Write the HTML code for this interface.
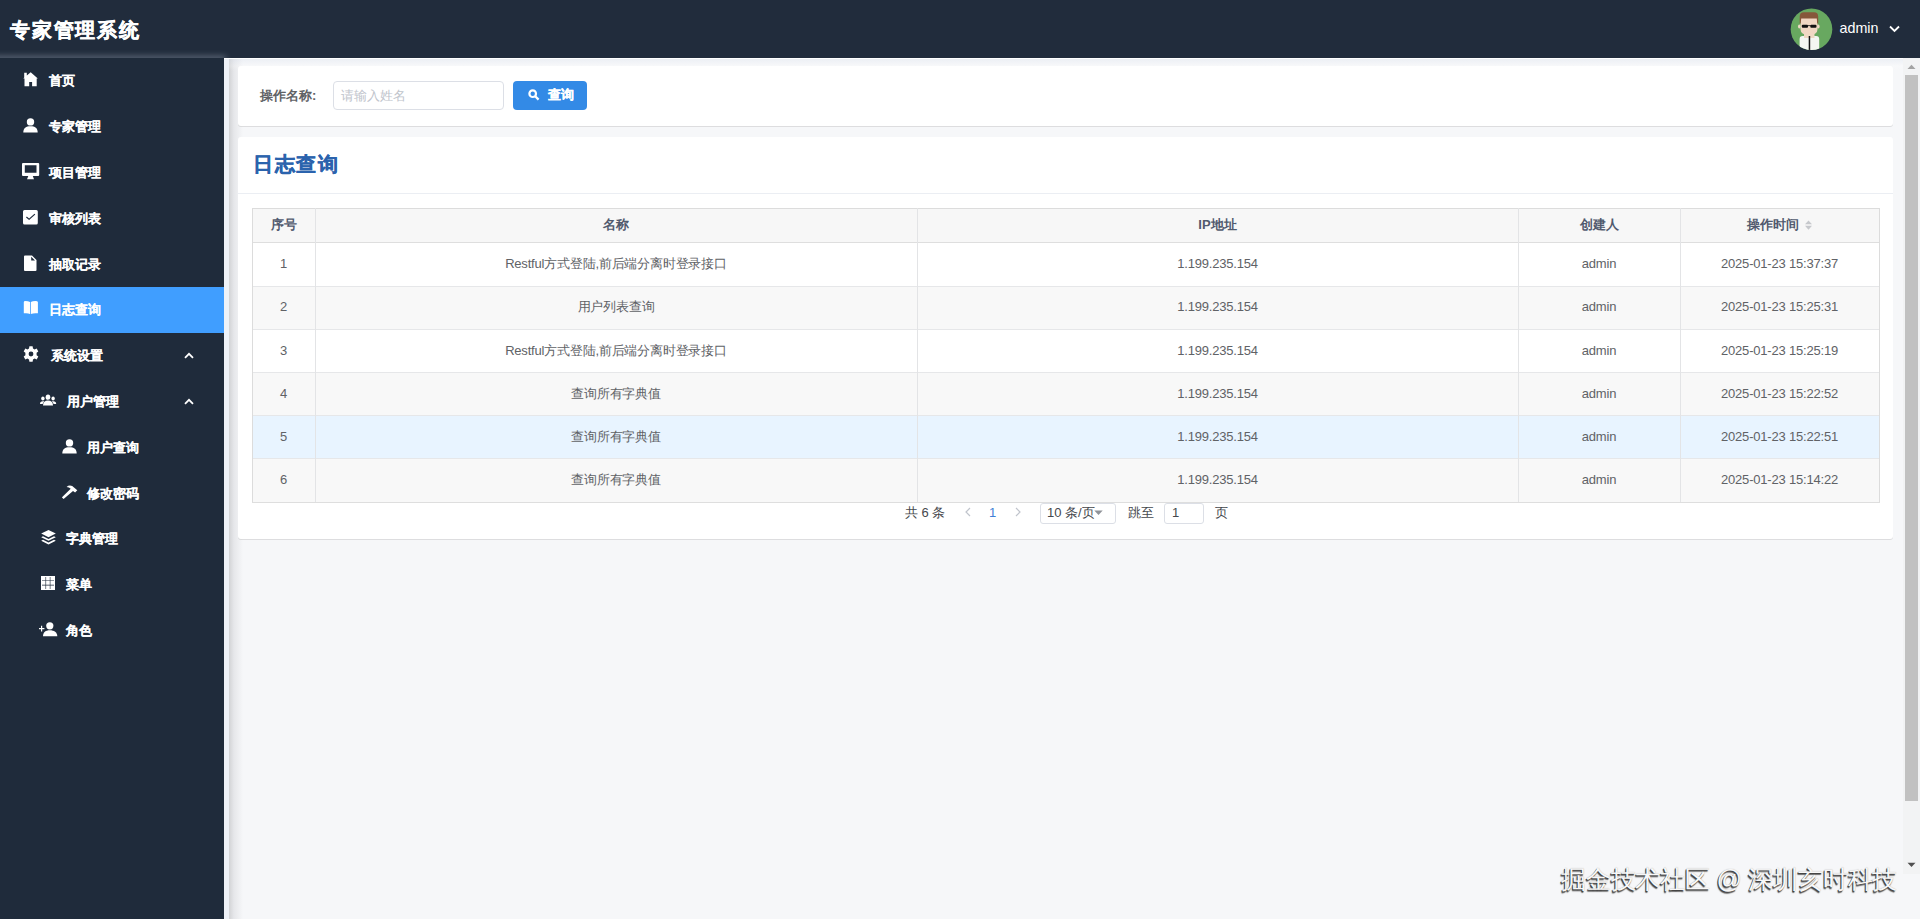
<!DOCTYPE html>
<html><head><meta charset="utf-8"><title>日志查询</title>
<style>
*{box-sizing:border-box;margin:0;padding:0}
html,body{width:1920px;height:919px;overflow:hidden}
body{position:relative;background:#f6f7f9;font-family:"Liberation Sans",sans-serif;color:#606266}
.abs{position:absolute}
#hdr{left:0;top:0;width:1920px;height:58px;background:#212c3c}
#logo{left:10px;top:15px;font-size:20px;font-weight:bold;color:#fff;line-height:30px;white-space:nowrap;letter-spacing:1.8px;-webkit-text-stroke:0.4px #fff}
#logoshadow{left:-10px;top:58px;width:236px;height:6px;box-shadow:0 -2px 6px rgba(220,230,245,.32);}
#side{left:0;top:58px;width:224px;height:861px;background:#1f2b3b}
#strip{left:224px;top:58px;width:5px;height:861px;background:#eef2f8}
#shadow{left:229px;top:58px;width:14px;height:861px;background:linear-gradient(to right,#d2d3d5,#e6e7ea 35%,#f6f7f9)}
#hline{left:224px;top:58px;width:1696px;height:1px;background:#ffffff}
.mi{position:absolute;left:0;width:224px;height:46px;color:#fff;font-size:13px;font-weight:bold;line-height:46px;white-space:nowrap;-webkit-text-stroke:0.1px #fff}
.mi.act{background:#409eff}
.mi span{position:absolute;top:0}
svg.ic{position:absolute;fill:#fff}
.card{position:absolute;background:#fff;border-radius:3px;box-shadow:0 1px 0 rgba(0,0,0,.1)}
.t{position:absolute;white-space:nowrap}
.cell{position:absolute;text-align:center;white-space:nowrap;font-size:13px;color:#606266;letter-spacing:-0.2px}
.hcell{position:absolute;text-align:center;white-space:nowrap;font-size:13px;font-weight:bold;color:#515a6e}
.vline{position:absolute;width:1px;background:#e3e4e6}
.hl{position:absolute;height:1px;background:#e6e7e9}
</style></head><body>
<div id="hdr" class="abs"></div>
<div id="logo" class="abs">专家管理系统</div>
<div id="logoshadow" class="abs"></div>
<svg class="abs" style="left:1786px;top:4px" width="50" height="50" viewBox="0 0 50 50">
<defs><clipPath id="cc"><circle cx="25.5" cy="25.2" r="20.8"/></clipPath></defs>
<circle cx="25.5" cy="25.2" r="20.8" fill="#68a860"/>
<g clip-path="url(#cc)">
<rect x="13.6" y="32" width="19.6" height="16" rx="3" fill="#f4f6f2"/>
<rect x="18" y="29" width="10.5" height="5" fill="#efd9c4"/>
<ellipse cx="13.3" cy="22.5" rx="1.3" ry="1.9" fill="#efd9c4"/>
<ellipse cx="32.3" cy="22.5" rx="1.3" ry="1.9" fill="#efd9c4"/>
<path d="M14.5 14 H31.5 V25 Q31.5 31 23 31 Q14.5 31 14.5 25 Z" fill="#f1d7c3"/>
<path d="M13.7 19.5 V12.5 Q13.7 8.2 18 8.2 H28 Q32.2 8.2 32.2 12.5 V19.5 L31.2 19.5 L30.8 14.6 H15.2 L14.7 19.5 Z" fill="#86573a"/>
<rect x="15.8" y="20.8" width="6.2" height="3" rx="1" fill="#111"/>
<rect x="24.3" y="20.8" width="6.2" height="3" rx="1" fill="#111"/>
<rect x="21.5" y="21.3" width="3.3" height="0.8" fill="#111"/>
<rect x="22.7" y="32" width="1.5" height="16" fill="#151515"/>
</g></svg>
<div class="t" style="left:1839.5px;top:19px;font-size:14.3px;color:#fff;line-height:18px">admin</div>
<svg class="abs" style="left:1889px;top:25px" width="11" height="8" viewBox="0 0 11 8"><path d="M1 1.5 L5.5 6 L10 1.5" fill="none" stroke="#fff" stroke-width="1.8"/></svg>
<div id="side" class="abs"></div>
<div id="strip" class="abs"></div>
<div id="shadow" class="abs"></div>
<div id="hline" class="abs"></div>
<div class="mi" style="top:58px"><span style="left:49px">首页</span></div>
<div class="mi" style="top:104px"><span style="left:49px">专家管理</span></div>
<div class="mi" style="top:150px"><span style="left:49px">项目管理</span></div>
<div class="mi" style="top:196px"><span style="left:49px">审核列表</span></div>
<div class="mi" style="top:242px"><span style="left:49px">抽取记录</span></div>
<div class="mi act" style="top:287px"><span style="left:49px">日志查询</span></div>
<div class="mi" style="top:333px"><span style="left:51px">系统设置</span></div>
<div class="mi" style="top:379px"><span style="left:67px">用户管理</span></div>
<div class="mi" style="top:425px"><span style="left:87px">用户查询</span></div>
<div class="mi" style="top:471px"><span style="left:87px">修改密码</span></div>
<div class="mi" style="top:516px"><span style="left:66px">字典管理</span></div>
<div class="mi" style="top:562px"><span style="left:66px">菜单</span></div>
<div class="mi" style="top:608px"><span style="left:66px">角色</span></div>
<svg class="ic" style="left:23px;top:72px" width="15" height="15" viewBox="0 0 15 15"><path d="M7.7 0.2 L14.8 6.4 L13.7 6.4 L13.7 14.2 L9.1 14.2 L9.1 10.1 L6.2 10.1 L6.2 14.2 L1.5 14.2 L1.5 6.4 L0.4 6.4 L1.2 5.6 L1.2 0.8 L3.8 0.8 L3.8 3.5 Z"/></svg>
<svg class="ic" style="left:23px;top:118px" width="15" height="15" viewBox="0 0 15 15"><circle cx="7.5" cy="3.9" r="3.7"/><path d="M0.3 14.5 C0.3 10.2 3 8.3 7.5 8.3 C12 8.3 14.7 10.2 14.7 14.5 Z"/></svg>
<svg class="ic" style="left:22px;top:163px" width="18" height="17" viewBox="0 0 18 17"><path fill-rule="evenodd" d="M1 0 H16.2 Q17.2 0 17.2 1 V12 Q17.2 13 16.2 13 H10.8 L12 16.3 H5 L6.3 13 H1 Q0 13 0 12 V1 Q0 0 1 0 Z M2.8 2.3 V9.8 H14.5 V2.3 Z"/></svg>
<svg class="ic" style="left:23px;top:210px" width="15" height="15" viewBox="0 0 15 15"><path fill-rule="evenodd" d="M1.5 0 H13.3 Q14.8 0 14.8 1.5 V13 Q14.8 14.5 13.3 14.5 H1.5 Q0 14.5 0 13 V1.5 Q0 0 1.5 0 Z M3.8 6.6 L3 7.5 L6.1 10 L12.3 4.6 L11.5 3.7 L6.1 8.4 Z"/></svg>
<svg class="ic" style="left:24px;top:255px" width="13" height="16" viewBox="0 0 13 16"><path fill-rule="evenodd" d="M1 0.5 H8 L12.5 5 V15 Q12.5 16 11.5 16 H1 Q0 16 0 15 V1.5 Q0 0.5 1 0.5 Z M7.2 1.8 V5.6 H11 Z"/></svg>
<svg class="ic" style="left:23px;top:300px" width="16" height="15" viewBox="0 0 16 15"><path d="M0.8 2.2 Q0.8 0.9 2.3 0.9 Q5.3 0.9 7 2 V14 Q5.5 13.2 3 13.2 H0.8 Z M7.8 2 Q9.5 0.9 12.5 0.9 Q14.9 0.9 14.9 2.2 V13.2 H12.5 Q10 13.2 7.8 14 Z"/></svg>
<svg class="ic" style="left:23px;top:346px" width="16" height="16" viewBox="0 0 16 16"><path fill-rule="evenodd" d="M6.4 0.3 H9.6 L10 2.5 L11.6 3.4 L13.7 2.6 L15.3 5.4 L13.6 6.8 V9.2 L15.3 10.6 L13.7 13.4 L11.6 12.6 L10 13.5 L9.6 15.7 H6.4 L6 13.5 L4.4 12.6 L2.3 13.4 L0.7 10.6 L2.4 9.2 V6.8 L0.7 5.4 L2.3 2.6 L4.4 3.4 L6 2.5 Z M8 5.6 A2.4 2.4 0 1 0 8 10.4 A2.4 2.4 0 1 0 8 5.6 Z"/></svg>
<svg class="ic" style="left:40px;top:394px" width="17" height="12" viewBox="0 0 17 12"><ellipse cx="8" cy="3.2" rx="2.3" ry="2.6"/><path d="M3 11.6 C3 8.2 5 6.6 8 6.6 C11 6.6 13 8.2 13 11.6 Z"/><ellipse cx="2.9" cy="4.6" rx="1.7" ry="2"/><path d="M0 10.1 C0 8 1 7.2 2.9 7.2 C3.5 7.2 4 7.3 4.3 7.5 C3.4 8.3 2.8 9.1 2.6 10.1 Z"/><ellipse cx="13.1" cy="4.6" rx="1.7" ry="2"/><path d="M16.2 10.1 C16.2 8 15.2 7.2 13.3 7.2 C12.7 7.2 12.2 7.3 11.9 7.5 C12.8 8.3 13.4 9.1 13.6 10.1 Z"/></svg>
<svg class="ic" style="left:62px;top:439px" width="15" height="15" viewBox="0 0 15 15"><circle cx="7.5" cy="3.9" r="3.7"/><path d="M0.3 14.5 C0.3 10.2 3 8.3 7.5 8.3 C12 8.3 14.7 10.2 14.7 14.5 Z"/></svg>
<svg class="ic" style="left:62px;top:485px" width="16" height="15" viewBox="0 0 16 15"><path d="M4.6 1.9 Q7 -0.4 10.2 0.9 L15.3 5.2 L13.1 7.5 L11 5.9 L1.6 14.1 L-0.1 12.3 L8.7 3.7 Q7.2 2.1 4.6 1.9 Z"/></svg>
<svg class="ic" style="left:41px;top:530px" width="15" height="15" viewBox="0 0 15 15"><path d="M7.5 0 L14.8 3.6 L7.5 7.2 L0.2 3.6 Z"/><path d="M2 6.2 L7.5 9 L13 6.2 L14.8 7.2 L7.5 10.8 L0.2 7.2 Z"/><path d="M2 9.8 L7.5 12.6 L13 9.8 L14.8 10.8 L7.5 14.5 L0.2 10.8 Z"/></svg>
<svg class="ic" style="left:41px;top:576px" width="14" height="14" viewBox="0 0 14 14"><path fill-rule="evenodd" d="M0 0 H14 V14 H0 Z M4.5 1 V4.5 H1 V5.1 H4.5 V8.8 H1 V9.4 H4.5 V13 H5.1 V9.4 H8.8 V13 H9.4 V9.4 H13 V8.8 H9.4 V5.1 H13 V4.5 H9.4 V1 H8.8 V4.5 H5.1 V1 Z M5.1 5.1 H8.8 V8.8 H5.1 Z"/></svg>
<svg class="ic" style="left:39px;top:622px" width="19" height="15" viewBox="0 0 19 15"><circle cx="10.8" cy="3.8" r="3.6"/><path d="M4 14.2 C4 10.2 6.6 8.2 10.8 8.2 C15 8.2 18.3 10.2 18.3 14.2 Z"/><path d="M2 3.8 H3.2 V6 H5.4 V7.2 H3.2 V9.4 H2 V7.2 H-0.2 V6 H2 Z"/></svg>
<svg class="ic" style="left:184px;top:352px" width="10" height="7" viewBox="0 0 10 7"><path d="M1 5.8 L5 1.8 L9 5.8" fill="none" stroke="#fff" stroke-width="1.8"/></svg>
<svg class="ic" style="left:184px;top:398px" width="10" height="7" viewBox="0 0 10 7"><path d="M1 5.8 L5 1.8 L9 5.8" fill="none" stroke="#fff" stroke-width="1.8"/></svg>
<div class="card" style="left:238px;top:66px;width:1655px;height:60px"></div>
<div class="t" style="left:260px;top:88px;font-size:13px;font-weight:bold;color:#606266;line-height:16px">操作名称:</div>
<div class="abs" style="left:333px;top:81px;width:171px;height:29px;border:1px solid #dcdfe6;border-radius:4px;background:#fff"></div>
<div class="t" style="left:341px;top:88px;font-size:13px;color:#c0c4cc;line-height:16px">请输入姓名</div>
<div class="abs" style="left:513px;top:81px;width:74px;height:29px;border-radius:4px;background:#338ae6"></div>
<svg class="abs" style="left:528px;top:89px" width="12" height="12" viewBox="0 0 12 12"><circle cx="4.7" cy="4.7" r="3.3" fill="none" stroke="#fff" stroke-width="2.2"/><path d="M7.2 7.2 L10.6 10.6" stroke="#fff" stroke-width="2.3"/></svg>
<div class="t" style="left:548px;top:87px;font-size:13px;font-weight:bold;color:#fff;line-height:16px;-webkit-text-stroke:0.25px #fff">查询</div>
<div class="card" style="left:238px;top:137px;width:1655px;height:402px"></div>
<div class="t" style="left:253px;top:150px;font-size:20px;font-weight:bold;color:#2b63ad;line-height:28px;letter-spacing:1.5px;-webkit-text-stroke:0.4px #2b63ad">日志查询</div>
<div class="abs" style="left:238px;top:193px;width:1655px;height:1px;background:#ebeef3"></div>
<div class="abs" style="left:252px;top:208px;width:1627px;height:34px;background:#f7f7f7"></div>
<div class="abs" style="left:252px;top:242px;width:1627px;height:44px;background:#ffffff"></div>
<div class="abs" style="left:252px;top:286px;width:1627px;height:43px;background:#f8f8f8"></div>
<div class="abs" style="left:252px;top:329px;width:1627px;height:43px;background:#ffffff"></div>
<div class="abs" style="left:252px;top:372px;width:1627px;height:43px;background:#f8f8f8"></div>
<div class="abs" style="left:252px;top:415px;width:1627px;height:43px;background:#e8f4ff"></div>
<div class="abs" style="left:252px;top:458px;width:1627px;height:44px;background:#f8f8f8"></div>
<div class="hl" style="left:252px;top:208px;width:1628px;background:#dcdcdc"></div>
<div class="hl" style="left:252px;top:242px;width:1628px;background:#dedede"></div>
<div class="hl" style="left:252px;top:286px;width:1628px;background:#e6e7e9"></div>
<div class="hl" style="left:252px;top:329px;width:1628px;background:#e6e7e9"></div>
<div class="hl" style="left:252px;top:372px;width:1628px;background:#e6e7e9"></div>
<div class="hl" style="left:252px;top:415px;width:1628px;background:#e6e7e9"></div>
<div class="hl" style="left:252px;top:458px;width:1628px;background:#e6e7e9"></div>
<div class="hl" style="left:252px;top:502px;width:1628px;background:#dedede"></div>
<div class="vline" style="left:252px;top:208px;height:294px;background:#dcdcdc"></div>
<div class="vline" style="left:315px;top:208px;height:294px;background:#e3e4e6"></div>
<div class="vline" style="left:917px;top:208px;height:294px;background:#e3e4e6"></div>
<div class="vline" style="left:1518px;top:208px;height:294px;background:#e3e4e6"></div>
<div class="vline" style="left:1680px;top:208px;height:294px;background:#e3e4e6"></div>
<div class="vline" style="left:1879px;top:208px;height:294px;background:#dcdcdc"></div>
<div class="hcell" style="left:252px;width:63px;top:208px;height:34px;line-height:34px">序号</div>
<div class="hcell" style="left:315px;width:602px;top:208px;height:34px;line-height:34px">名称</div>
<div class="hcell" style="left:917px;width:601px;top:208px;height:34px;line-height:34px">IP地址</div>
<div class="hcell" style="left:1518px;width:162px;top:208px;height:34px;line-height:34px">创建人</div>
<div class="hcell" style="left:1680px;width:199px;top:208px;height:34px;line-height:34px">操作时间<svg style="position:relative;top:2px;margin-left:6px" width="8" height="11" viewBox="0 0 8 11"><path d="M3.5 0.5 L7 4.3 H0 Z M0 5.8 H7 L3.5 9.8 Z" fill="#c6c8cc"/></svg></div>
<div class="cell" style="left:252px;width:63px;top:242px;height:44px;line-height:44px">1</div>
<div class="cell" style="left:315px;width:602px;top:242px;height:44px;line-height:44px">Restful方式登陆,前后端分离时登录接口</div>
<div class="cell" style="left:917px;width:601px;top:242px;height:44px;line-height:44px">1.199.235.154</div>
<div class="cell" style="left:1518px;width:162px;top:242px;height:44px;line-height:44px">admin</div>
<div class="cell" style="left:1680px;width:199px;top:242px;height:44px;line-height:44px">2025-01-23 15:37:37</div>
<div class="cell" style="left:252px;width:63px;top:285px;height:43px;line-height:43px">2</div>
<div class="cell" style="left:315px;width:602px;top:285px;height:43px;line-height:43px">用户列表查询</div>
<div class="cell" style="left:917px;width:601px;top:285px;height:43px;line-height:43px">1.199.235.154</div>
<div class="cell" style="left:1518px;width:162px;top:285px;height:43px;line-height:43px">admin</div>
<div class="cell" style="left:1680px;width:199px;top:285px;height:43px;line-height:43px">2025-01-23 15:25:31</div>
<div class="cell" style="left:252px;width:63px;top:329px;height:43px;line-height:43px">3</div>
<div class="cell" style="left:315px;width:602px;top:329px;height:43px;line-height:43px">Restful方式登陆,前后端分离时登录接口</div>
<div class="cell" style="left:917px;width:601px;top:329px;height:43px;line-height:43px">1.199.235.154</div>
<div class="cell" style="left:1518px;width:162px;top:329px;height:43px;line-height:43px">admin</div>
<div class="cell" style="left:1680px;width:199px;top:329px;height:43px;line-height:43px">2025-01-23 15:25:19</div>
<div class="cell" style="left:252px;width:63px;top:372px;height:43px;line-height:43px">4</div>
<div class="cell" style="left:315px;width:602px;top:372px;height:43px;line-height:43px">查询所有字典值</div>
<div class="cell" style="left:917px;width:601px;top:372px;height:43px;line-height:43px">1.199.235.154</div>
<div class="cell" style="left:1518px;width:162px;top:372px;height:43px;line-height:43px">admin</div>
<div class="cell" style="left:1680px;width:199px;top:372px;height:43px;line-height:43px">2025-01-23 15:22:52</div>
<div class="cell" style="left:252px;width:63px;top:415px;height:43px;line-height:43px">5</div>
<div class="cell" style="left:315px;width:602px;top:415px;height:43px;line-height:43px">查询所有字典值</div>
<div class="cell" style="left:917px;width:601px;top:415px;height:43px;line-height:43px">1.199.235.154</div>
<div class="cell" style="left:1518px;width:162px;top:415px;height:43px;line-height:43px">admin</div>
<div class="cell" style="left:1680px;width:199px;top:415px;height:43px;line-height:43px">2025-01-23 15:22:51</div>
<div class="cell" style="left:252px;width:63px;top:458px;height:44px;line-height:44px">6</div>
<div class="cell" style="left:315px;width:602px;top:458px;height:44px;line-height:44px">查询所有字典值</div>
<div class="cell" style="left:917px;width:601px;top:458px;height:44px;line-height:44px">1.199.235.154</div>
<div class="cell" style="left:1518px;width:162px;top:458px;height:44px;line-height:44px">admin</div>
<div class="cell" style="left:1680px;width:199px;top:458px;height:44px;line-height:44px">2025-01-23 15:14:22</div>
<div class="t" style="left:905px;top:505px;font-size:13px;color:#45484d;line-height:16px">共 6 条</div>
<svg class="abs" style="left:964px;top:507px" width="8" height="10" viewBox="0 0 8 10"><path d="M6 1 L2 5 L6 9" fill="none" stroke="#c0c4cc" stroke-width="1.2"/></svg>
<div class="t" style="left:989px;top:505px;font-size:13px;color:#3f7fd6;line-height:16px">1</div>
<svg class="abs" style="left:1014px;top:507px" width="8" height="10" viewBox="0 0 8 10"><path d="M2 1 L6 5 L2 9" fill="none" stroke="#c0c4cc" stroke-width="1.2"/></svg>
<div class="abs" style="left:1040px;top:503px;width:76px;height:21px;border:1px solid #dcdfe6;border-radius:3px"></div>
<div class="t" style="left:1047px;top:505px;font-size:13px;color:#45484d;line-height:16px">10 条/页</div>
<svg class="abs" style="left:1094px;top:510px" width="9" height="6" viewBox="0 0 9 6"><path d="M0.3 0.5 H8.7 L4.5 5 Z" fill="#909399"/></svg>
<div class="t" style="left:1128px;top:505px;font-size:13px;color:#45484d;line-height:16px">跳至</div>
<div class="abs" style="left:1164px;top:503px;width:40px;height:21px;border:1px solid #dcdfe6;border-radius:3px"></div>
<div class="t" style="left:1172px;top:505px;font-size:13px;color:#45484d;line-height:16px">1</div>
<div class="t" style="left:1215px;top:505px;font-size:13px;color:#45484d;line-height:16px">页</div>
<div class="abs" style="left:229px;top:59px;width:1691px;height:12px;background:linear-gradient(to bottom,rgba(215,222,235,.3),rgba(255,255,255,.2) 60%,rgba(255,255,255,0))"></div>
<div class="abs" style="left:1903px;top:58px;width:17px;height:816px;background:#f2f3f4"></div>
<svg class="abs" style="left:1907px;top:64px" width="9" height="6" viewBox="0 0 9 6"><path d="M0.5 5 L4.5 0.8 L8.5 5 Z" fill="#a3a3a3"/></svg>
<div class="abs" style="left:1905px;top:75px;width:13px;height:726px;background:#c1c1c1"></div>
<svg class="abs" style="left:1907px;top:862px" width="9" height="6" viewBox="0 0 9 6"><path d="M0.5 0.8 H8.5 L4.5 5 Z" fill="#505050"/></svg>
<div class="t" style="left:1561px;top:864px;font-size:25px;letter-spacing:-0.2px;color:#f8f8f8;line-height:30px;text-shadow:-1px 1px 0 #444, -1px 1.5px 1px #666, 0 0 1px #aaa">掘金技术社区 @ 深圳亥时科技</div>
</body></html>
